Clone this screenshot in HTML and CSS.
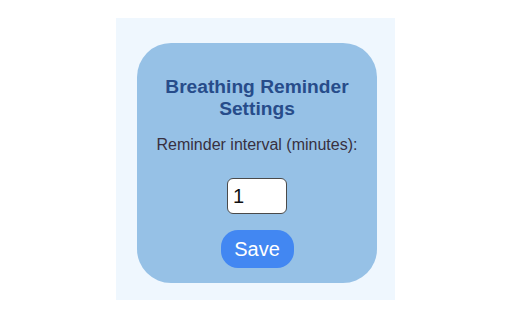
FILE: index.html
```html
<!DOCTYPE html>
<html>
<head>
<meta charset="utf-8">
<link rel="stylesheet" href="styles.css">
</head>
<body>
<div class="panel">
  <div class="card">
    <h2 class="title">Breathing Reminder Settings</h2>
    <label class="label" for="interval">Reminder interval (minutes):</label>
    <input class="field" id="interval" type="text" value="1">
    <button class="save">Save</button>
  </div>
</div>
</body>
</html>
```

FILE: styles.css
```css
html, body {
  margin: 0;
  padding: 0;
  background: #ffffff;
}
body {
  width: 512px;
  height: 320px;
  display: flex;
  align-items: center;
  justify-content: center;
  font-family: "Liberation Sans", Arial, sans-serif;
}
.panel {
  width: 279px;
  height: 282px;
  margin: 0 1px 2px 0;
  box-sizing: border-box;
  padding: 25px 18px 17px 21px;
  background: #eff7fe;
}
.card {
  width: 240px;
  height: 240px;
  box-sizing: border-box;
  padding-top: 33px;
  background: #96c1e6;
  border-radius: 34px;
  display: flex;
  flex-direction: column;
  align-items: center;
  text-align: center;
}
.title {
  margin: 0;
  width: 200px;
  font-size: 19.2px;
  font-weight: bold;
  line-height: 22px;
  color: #274c8a;
}
.label {
  margin-top: 16px;
  font-size: 16px;
  line-height: 18px;
  color: #383040;
}
.field {
  margin-top: 24px;
  width: 60px;
  height: 36px;
  box-sizing: border-box;
  padding: 2px 5px;
  border: 1.5px solid #4a4a4a;
  border-radius: 6px;
  background: #fff;
  font-family: "Liberation Sans", Arial, sans-serif;
  font-size: 20px;
  color: #111;
  outline: none;
}
.save {
  margin-top: 16px;
  width: 73px;
  height: 38px;
  padding: 0;
  border: none;
  border-radius: 17px;
  background: #4287f2;
  color: #fff;
  font-family: "Liberation Sans", Arial, sans-serif;
  font-size: 20px;
}
```
